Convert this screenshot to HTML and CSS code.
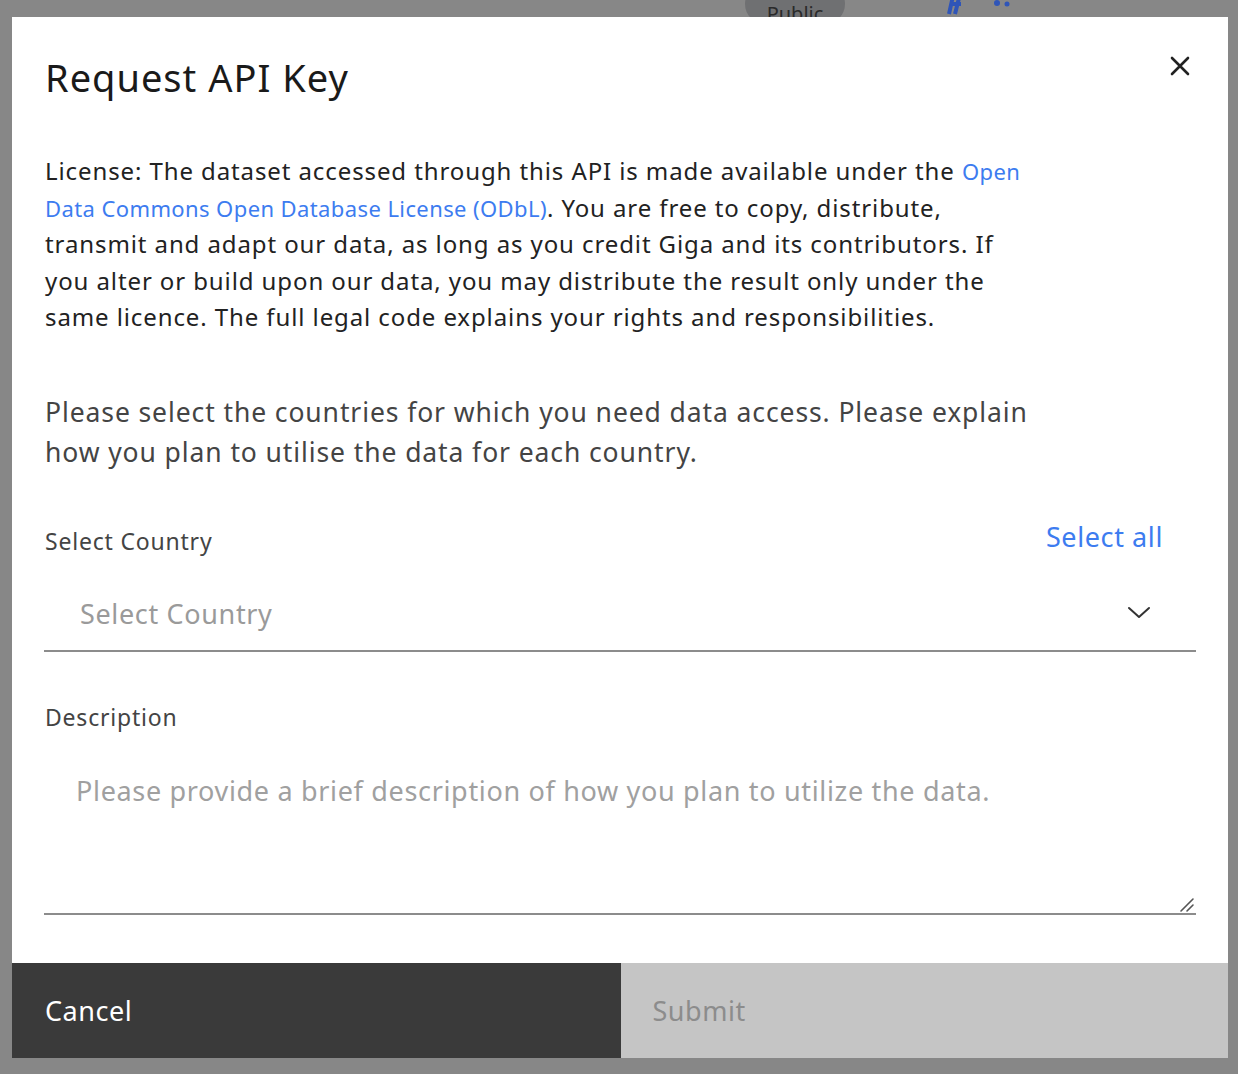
FILE: index.html
```html
<!DOCTYPE html>
<html lang="en">
<head>
<meta charset="utf-8">
<title>Request API Key</title>
<link rel="stylesheet" href="styles.css">
</head>
<body>
<div class="backdrop-pill">Public</div>
<svg class="backdrop-icon" width="80" height="20" viewBox="0 0 80 20"><path d="M8 -4 L4 14 M6 4 L16 4 M14 -2 L10 14" stroke="#2f55b8" stroke-width="4" fill="none"/><circle cx="52" cy="3" r="3" fill="#2f55b8"/><circle cx="62" cy="4" r="2.5" fill="#2f55b8"/></svg>
<div class="modal">
  <div class="modal-body">
    <div class="header">
      <h1 class="title">Request API Key</h1>
      <button class="close" aria-label="Close">
        <svg width="22" height="22" viewBox="0 0 22 22"><path d="M3 3 L19 19 M19 3 L3 19" stroke="#222" stroke-width="2.6" stroke-linecap="round"/></svg>
      </button>
    </div>
    <p class="license">License: The dataset accessed through this API is made available under the <a class="link" href="#">Open Data Commons Open Database License (ODbL)</a>. You are free to copy, distribute, transmit and adapt our data, as long as you credit Giga and its contributors. If you alter or build upon our data, you may distribute the result only under the same licence. The full legal code explains your rights and responsibilities.</p>
    <p class="intro">Please select the countries for which you need data access. Please explain how you plan to utilise the data for each country.</p>
    <div class="label-row">
      <span class="label">Select Country</span>
      <a class="select-all" href="#">Select all</a>
    </div>
    <div class="select">
      <span class="placeholder">Select Country</span>
      <svg class="chevron" width="24" height="14" viewBox="0 0 24 14"><path d="M2 2 L12 11 L22 2" stroke="#333" stroke-width="2" fill="none" stroke-linecap="round" stroke-linejoin="round"/></svg>
    </div>
    <div class="label desc-label">Description</div>
    <div class="textarea-wrap">
      <textarea class="textarea" placeholder="Please provide a brief description of how you plan to utilize the data."></textarea>
      <svg class="grip" width="16" height="16" viewBox="0 0 16 16"><path d="M2 14 L14 2 M8 14 L14 8" stroke="#555" stroke-width="1.6" stroke-linecap="round"/></svg>
    </div>
  </div>
  <div class="footer">
    <button class="btn btn-cancel">Cancel</button>
    <button class="btn btn-submit" disabled>Submit</button>
  </div>
</div>
</body>
</html>
```
FILE: styles.css
```css
* { box-sizing: border-box; }
html, body { margin: 0; padding: 0; }
body {
  background: #878787;
  font-family: "Noto Sans", "Open Sans", sans-serif;
  padding: 17px 10px 16px 12px;
  position: relative;
  min-height: 1074px;
}
.backdrop-pill {
  position: absolute;
  left: 745px;
  top: -16px;
  width: 100px;
  height: 40px;
  border-radius: 20px;
  background: #6f7072;
  color: #2a2a2a;
  font-size: 20px;
  text-align: center;
  line-height: 60px;
}
.backdrop-icon {
  position: absolute;
  left: 945px;
  top: 0;
}
.modal {
  position: relative;
  width: 1216px;
  height: 1041px;
  background: #fff;
  display: flex;
  flex-direction: column;
}
.modal-body {
  flex: 1;
  padding: 36px 32px 0 32px;
  display: flex;
  flex-direction: column;
}
.header {
  display: flex;
  justify-content: space-between;
  align-items: flex-start;
}
.title {
  margin: 0 0 0 1px;
  font-size: 38px;
  font-weight: 400;
  letter-spacing: 1px;
  line-height: 48px;
  color: #1a1a1a;
}
.close {
  border: 0;
  background: none;
  padding: 0;
  margin: 2px 5px 0 0;
  width: 22px;
  height: 22px;
  cursor: pointer;
}
.license {
  margin: 52px 0 0 1px;
  width: 990px;
  font-size: 24px;
  letter-spacing: 0.9px;
  line-height: 36.5px;
  color: #222;
}
.link {
  color: #3d7cf0;
  text-decoration: none;
  font-size: 22px;
  letter-spacing: 0.4px;
}
.intro {
  margin: 56px 0 0 1px;
  width: 1000px;
  font-size: 26.5px;
  letter-spacing: 0.9px;
  line-height: 40px;
  color: #444;
}
.label-row {
  margin-top: 47px;
  display: flex;
  justify-content: space-between;
  align-items: flex-end;
  padding-right: 33px;
}
.label {
  font-size: 23px;
  line-height: 30px;
  color: #444;
  letter-spacing: 0.8px;
  padding-left: 1px;
}
.select-all {
  font-size: 27px;
  letter-spacing: 0.6px;
  line-height: 36px;
  color: #3d7cf0;
  text-decoration: none;
  margin-bottom: 1px;
}
.select {
  display: flex;
  justify-content: space-between;
  align-items: center;
  padding: 40px 45px 18px 36px;
  border-bottom: 2px solid #8c8c8c;
}
.placeholder {
  font-size: 27px;
  letter-spacing: 0.65px;
  line-height: 36px;
  color: #9a9a9a;
}
.chevron { margin-top: -2px; }
.desc-label {
  margin-top: 50px;
}
.textarea-wrap {
  position: relative;
}
.textarea {
  display: block;
  width: 100%;
  height: 183px;
  border: 0;
  border-bottom: 2px solid #8c8c8c;
  padding: 41px 20px 0 32px;
  font-family: "Noto Sans", "Open Sans", sans-serif;
  font-size: 27px;
  letter-spacing: 0.67px;
  line-height: 36px;
  color: #333;
  outline: none;
  resize: none;
}
.textarea::placeholder { color: #a0a0a0; }
.grip {
  position: absolute;
  right: 1px;
  bottom: 2px;
}
.footer {
  display: flex;
  height: 95px;
}
.btn {
  flex: 1;
  border: 0;
  text-align: left;
  font-family: "Noto Sans", "Open Sans", sans-serif;
  font-size: 27px;
  letter-spacing: 0.55px;
  padding: 0 32px;
}
.btn-cancel {
  background: #3a3a3a;
  color: #fff;
  padding-left: 33px;
}
.btn-submit {
  background: #c5c5c5;
  color: #8c8c8c;
}
```
